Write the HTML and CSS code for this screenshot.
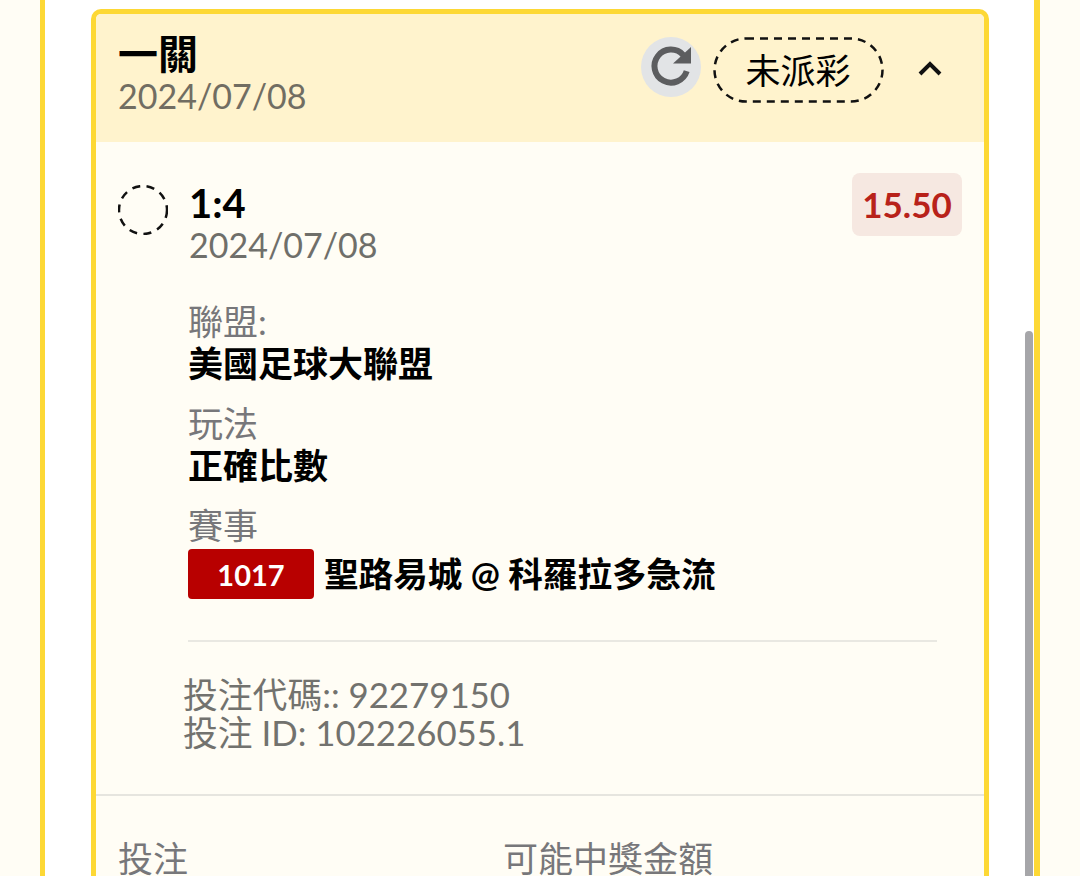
FILE: index.html
```html
<!DOCTYPE html>
<html lang="zh-Hant">
<head>
    <meta charset="UTF-8">
    <meta name="viewport" content="width=device-width, initial-scale=1.0">
    <title>一關</title>
    <link rel="stylesheet" href="styles.css">
</head>
<body>
    <div class="panel">
        <div class="card">
            <div class="card-head">
                <div class="head-text">
                    <div class="head-title">一關</div>
                    <div class="date">2024/07/08</div>
                </div>
                <div class="head-actions">
                    <div class="refresh">
                        <svg width="60" height="60" viewBox="0 0 60 60">
                            <path fill="none" stroke="#5c5d5f" stroke-width="6" d="M42.2 18A16.5 16.5 0 1 0 45.7 34.1"/>
                            <path fill="#5c5d5f" d="M50 10L32 26.5H50z"/>
                        </svg>
                    </div>
                    <div class="status">
                        <svg class="status-line" width="171" height="66" viewBox="0 0 171 66">
                            <rect x="1.5" y="1.5" width="168" height="63" rx="31.5" fill="none" stroke="#111" stroke-width="2.5" stroke-dasharray="8 6"/>
                        </svg>
                        未派彩
                    </div>
                    <svg class="chevron" width="28" height="28" viewBox="0 0 28 28"><path fill="none" stroke="#111" stroke-width="4" d="M4 18L14 8l10 10"/></svg>
                </div>
            </div>
            <div class="card-body">
                <div class="leg">
                    <svg class="leg-circle" width="50" height="50" viewBox="0 0 50 50"><circle cx="25" cy="25" r="24" fill="none" stroke="#111" stroke-width="2.5" stroke-dasharray="8 6.5"/></svg>
                    <div class="leg-main">
                        <div class="leg-title">1:4</div>
                        <div class="date">2024/07/08</div>
                    </div>
                    <div class="odds">15.50</div>
                </div>
                <div class="details">
                    <div class="field">
                        <div class="label">聯盟:</div>
                        <div class="value">美國足球大聯盟</div>
                    </div>
                    <div class="field">
                        <div class="label">玩法</div>
                        <div class="value">正確比數</div>
                    </div>
                    <div class="field">
                        <div class="label">賽事</div>
                        <div class="match">
                            <span class="match-no">1017</span>
                            <span class="value match-name">聖路易城 @ 科羅拉多急流</span>
                        </div>
                    </div>
                </div>
                <div class="ids">
                    <div>投注代碼:: 92279150</div>
                    <div>投注 ID: 102226055.1</div>
                </div>
            </div>
            <div class="card-foot">
                <div class="foot-col">投注</div>
                <div class="foot-col">可能中獎金額</div>
            </div>
        </div>
    </div>
    <div class="scrollbar"></div>
</body>
</html>
```

FILE: styles.css
```css
html, body {
    height: 100%;
}

body {
    margin: 0;
    padding: 0 40px;
    height: 876px;
    overflow: hidden;
    background-color: #fffdf5;
    font-family: Lato, "Noto Sans CJK TC", sans-serif;
    color: #000;
}

.panel {
    height: 876px;
    padding: 9px 45px 0 46px;
    box-sizing: border-box;
    background-color: #fff;
    border-left: 5px solid #fdd835;
    border-right: 6px solid #fdd835;
    overflow: hidden;
}

.card {
    border: 5px solid #fdd835;
    border-bottom: none;
    border-radius: 10px 10px 0 0;
    background-color: #fffdf5;
    height: 1000px;
}

.card-head {
    display: flex;
    justify-content: space-between;
    height: 128px;
    padding: 0 40px 0 22px;
    background-color: #fff3cd;
    border-radius: 5px 5px 0 0;
}

.head-text {
    padding-top: 18px;
}

.head-title {
    font-size: 40px;
    line-height: 44px;
    font-weight: 700;
}

.date {
    font-size: 34px;
    line-height: 40px;
    color: #716d62;
}

.head-actions {
    display: flex;
    align-items: center;
    height: 111px;
}

.refresh {
    width: 60px;
    height: 60px;
    margin-bottom: 5px;
    border-radius: 50%;
    background-color: #e2e4e6;
}

.refresh svg {
    display: block;
}

.status {
    position: relative;
    margin-left: 12px;
    width: 170px;
    height: 66px;
    font-size: 35px;
    line-height: 66px;
    text-align: center;
}

.status-line {
    position: absolute;
    left: 0;
    top: 0;
}

.chevron {
    margin-left: 33px;
}

.card-body {
    padding: 31px 22px 0;
}

.leg {
    display: flex;
    align-items: flex-start;
}

.leg-circle {
    flex: none;
    margin-top: 12px;
}

.leg-main {
    margin-left: 21px;
    flex: 1;
    padding-top: 8px;
}

.leg-main .date {
    color: #6f6f6a;
}

.leg-title {
    font-size: 40px;
    line-height: 44px;
    font-weight: 700;
}

.odds {
    width: 110px;
    height: 63px;
    border-radius: 8px;
    background-color: #f6e8e1;
    color: #b8221a;
    font-size: 35px;
    font-weight: 700;
    line-height: 63px;
    text-align: center;
}

.details {
    margin: 36px 25px 0 70px;
    padding-bottom: 41px;
    border-bottom: 2px solid #e9e8e2;
}

.field {
    margin-bottom: 18px;
}

.field:last-child {
    margin-bottom: 0;
}

.label {
    font-size: 35px;
    line-height: 40px;
    color: #77777a;
}

.value {
    font-size: 35px;
    line-height: 44px;
    font-weight: 700;
}

.match {
    display: flex;
    align-items: center;
    gap: 10px;
    margin-top: 4px;
}

.match-no {
    width: 126px;
    height: 50px;
    border-radius: 4px;
    background-color: #b80000;
    color: #fff;
    font-size: 29px;
    line-height: 52px;
    font-weight: 700;
    text-align: center;
}

.match-name {
    font-size: 34.6px;
}

.ids {
    margin: 34px 0 0 65px;
    font-size: 34.8px;
    line-height: 38px;
    color: #72726e;
}

.card-foot {
    display: flex;
    margin-top: 42px;
    padding: 40px 22px 0;
    border-top: 2px solid #e6e5df;
    font-size: 35px;
    line-height: 44px;
    color: #77777a;
}

.foot-col {
    width: 385px;
}

.scrollbar {
    position: absolute;
    left: 1025px;
    top: 331px;
    width: 8px;
    height: 545px;
    border-radius: 4px 4px 0 0;
    background-color: #a6a6a9;
}
```
